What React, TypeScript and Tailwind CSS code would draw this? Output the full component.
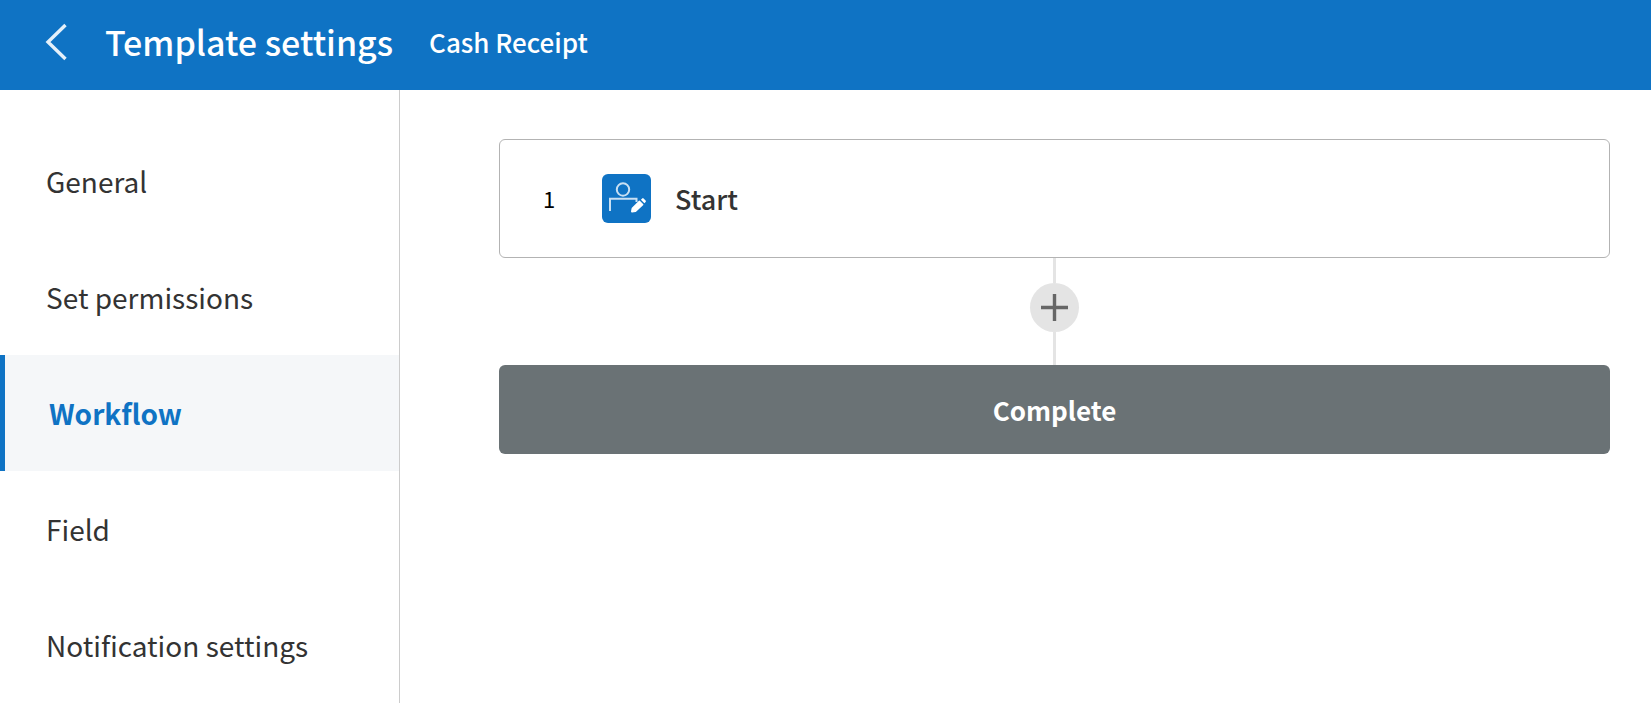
const navItems = [
  { label: 'General', active: false },
  { label: 'Set permissions', active: false },
  { label: 'Workflow', active: true },
  { label: 'Field', active: false },
  { label: 'Notification settings', active: false },
];

function BackIcon() {
  return (
    <svg width="24" height="40" viewBox="0 0 24 40" fill="none" stroke="#e4f0fa" strokeWidth="3.4" aria-hidden="true">
      <path d="M21.5 3 L4 20 L21.5 37" />
    </svg>
  );
}

function StartIcon() {
  return (
    <svg width="49" height="49" viewBox="0 0 49 49" className="block" aria-hidden="true">
      <rect width="49" height="49" rx="6" fill="#0f73c4" />
      <g fill="none" stroke="#c9e0f3" strokeWidth="2">
        <circle cx="21" cy="15.5" r="6.2" />
        <path d="M8 37 V24.7 H34.5 V28" />
      </g>
      <g fill="#ffffff">
        <path d="M30 37.4 L30.6 34.4 L37.4 27.6 L40.4 30.6 L33.4 36.9 Z" stroke="#ffffff" strokeWidth="2" strokeLinejoin="round" />
        <path d="M38.9 25.8 L40.2 24.4 Q40.9 23.7 41.6 24.4 L43.6 26.4 Q44.3 27.2 43.6 28 L42.4 29.2 Z" />
      </g>
    </svg>
  );
}

export default function App() {
  return (
    <div className="flex min-h-screen flex-col bg-white font-['Noto_Sans_CJK_KR','Noto_Sans_CJK_SC',sans-serif] text-[#333333]">
      <header className="flex h-[90px] items-center bg-[#0f73c4] pb-1.5 pl-11 text-white">
        <button type="button" aria-label="Back" className="mr-[37px]">
          <BackIcon />
        </button>
        <h1 className="mr-9 text-[34px] leading-10 font-medium">Template settings</h1>
        <p className="text-[26px] leading-10 font-medium">Cash Receipt</p>
      </header>
      <div className="flex flex-1">
        <nav aria-label="Template settings" className="w-[400px] shrink-0 border-r border-[#cccccc] pt-[33px]">
          <ul>
            {navItems.map((item) => (
              <li key={item.label}>
                <a
                  href="#"
                  aria-current={item.active ? 'page' : undefined}
                  className={
                    item.active
                      ? 'flex h-[116px] items-center border-l-5 border-[#0f73c4] bg-[#f5f7f9] pl-11 text-[28px] font-bold text-[#0f73c4]'
                      : 'flex h-[116px] items-center pl-[46px] text-[28px]'
                  }
                >
                  {item.label}
                </a>
              </li>
            ))}
          </ul>
        </nav>
        <main className="flex flex-1 flex-col pt-[49px] pr-[41px] pl-[99px]">
          <section className="flex h-[119px] items-center rounded-md border border-[#b3b3b3]">
            <span className="w-[102px] pl-[43px] text-[22px] text-black">1</span>
            <StartIcon />
            <h2 className="ml-6 text-[27px] leading-11 font-medium">Start</h2>
          </section>
          <div className="flex flex-col items-center">
            <div className="h-[25px] w-[3px] bg-[#e4e4e4]" />
            <button type="button" aria-label="Add step" className="flex size-[49px] items-center justify-center rounded-full bg-[#e4e4e4]">
              <svg width="27" height="27" viewBox="0 0 27 27" fill="none" stroke="#666666" strokeWidth="3.4" aria-hidden="true">
                <path d="M13.5 0 V27 M0 13.5 H27" />
              </svg>
            </button>
            <div className="h-[33px] w-[3px] bg-[#e4e4e4]" />
          </div>
          <div className="flex h-[89px] items-center justify-center rounded-md bg-[#6a7275] text-[26px] font-bold text-white">
            Complete
          </div>
        </main>
      </div>
    </div>
  );
}
